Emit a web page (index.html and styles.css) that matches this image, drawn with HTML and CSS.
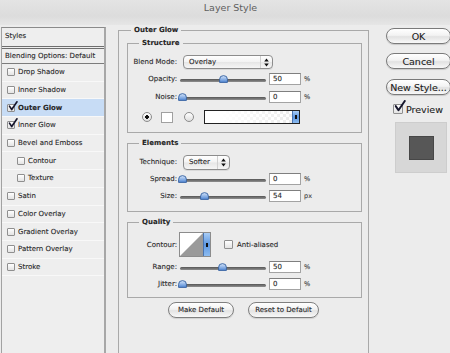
FILE: index.html
```html
<!DOCTYPE html>
<html lang="en">
<head>
<meta charset="utf-8">
<title>Layer Style</title>
<link rel="stylesheet" href="styles.css">
</head>
<body>
<svg class="defs" width="0" height="0" aria-hidden="true">
  <defs>
    <linearGradient id="thumbFill" x1="0" y1="0" x2="0" y2="1">
      <stop offset="0" stop-color="#d6e6fb"/>
      <stop offset="1" stop-color="#4f86d4"/>
    </linearGradient>
    <symbol id="thumb" viewBox="0 0 9 8">
      <path d="M0.6 7.4V4.3Q0.6 0.6 4.5 0.6Q8.4 0.6 8.4 4.3V7.4Z" fill="url(#thumbFill)" stroke="#34609f" stroke-width="0.9"/>
    </symbol>
    <symbol id="check" viewBox="0 0 11 11">
      <path d="M1.6 5.6L4.1 9.4L9.9 0.9" fill="none" stroke="#16162c" stroke-width="1.8" stroke-linecap="round" stroke-linejoin="round"/>
    </symbol>
    <symbol id="updown" viewBox="0 0 5 9">
      <path d="M2.5 0.4L4.8 3.5H0.2Z M2.5 8.6L4.8 5.5H0.2Z" fill="#111"/>
    </symbol>
  </defs>
</svg>

<div class="window">
  <header class="titlebar">Layer Style</header>
  <div class="main">
    <aside class="styles-panel">
      <div class="panel-head">Styles</div>
      <div class="panel-blend">Blending Options: Default</div>
      <ul class="effects">
        <li class="effect"><span class="cb"></span>Drop Shadow</li>
        <li class="effect"><span class="cb"></span>Inner Shadow</li>
        <li class="effect active"><span class="cb"><svg class="tick"><use href="#check"/></svg></span>Outer Glow</li>
        <li class="effect"><span class="cb"><svg class="tick"><use href="#check"/></svg></span>Inner Glow</li>
        <li class="effect"><span class="cb"></span>Bevel and Emboss</li>
        <li class="effect sub"><span class="cb"></span>Contour</li>
        <li class="effect sub"><span class="cb"></span>Texture</li>
        <li class="effect"><span class="cb"></span>Satin</li>
        <li class="effect"><span class="cb"></span>Color Overlay</li>
        <li class="effect"><span class="cb"></span>Gradient Overlay</li>
        <li class="effect"><span class="cb"></span>Pattern Overlay</li>
        <li class="effect"><span class="cb"></span>Stroke</li>
      </ul>
    </aside>

    <section class="settings">
      <fieldset class="outer">
        <legend class="outer-title">Outer Glow</legend>

        <fieldset class="group structure">
          <legend class="group-title">Structure</legend>
          <div class="row r-blend">
            <span class="lbl">Blend Mode:</span>
            <div class="select select-blend"><span class="select-val">Overlay</span><span class="select-arrows"><svg class="updown"><use href="#updown"/></svg></span></div>
          </div>
          <div class="row r-18">
            <span class="lbl">Opacity:</span>
            <div class="slider"><div class="track"></div><svg class="thumb" style="--v:0.5"><use href="#thumb"/></svg></div>
            <span class="field">50</span><span class="unit">%</span>
          </div>
          <div class="row r-17">
            <span class="lbl">Noise:</span>
            <div class="slider"><div class="track"></div><svg class="thumb" style="--v:0"><use href="#thumb"/></svg></div>
            <span class="field">0</span><span class="unit">%</span>
          </div>
          <div class="row r-color">
            <span class="radio on"></span>
            <span class="swatch"></span>
            <span class="radio"></span>
            <div class="gradbar"><span class="gradbar-fill"></span><span class="gradbar-btn"><span class="mark"></span></span></div>
          </div>
        </fieldset>

        <fieldset class="group elements">
          <legend class="group-title">Elements</legend>
          <div class="row r-tech">
            <span class="lbl">Technique:</span>
            <div class="select select-tech"><span class="select-val">Softer</span><span class="select-arrows"><svg class="updown"><use href="#updown"/></svg></span></div>
          </div>
          <div class="row r-17">
            <span class="lbl">Spread:</span>
            <div class="slider"><div class="track"></div><svg class="thumb" style="--v:0"><use href="#thumb"/></svg></div>
            <span class="field">0</span><span class="unit">%</span>
          </div>
          <div class="row r-17">
            <span class="lbl">Size:</span>
            <div class="slider"><div class="track"></div><svg class="thumb" style="--v:0.27"><use href="#thumb"/></svg></div>
            <span class="field">54</span><span class="unit">px</span>
          </div>
        </fieldset>

        <fieldset class="group quality">
          <legend class="group-title">Quality</legend>
          <div class="row r-contour">
            <span class="lbl">Contour:</span>
            <div class="contour">
              <svg class="contour-curve" viewBox="0 0 24 23" preserveAspectRatio="none"><path d="M0 23L24 0V23Z" fill="#9a9a9a"/></svg>
              <span class="contour-btn"><span class="mark"></span></span>
            </div>
            <span class="cb cb-aa"></span>
            <span class="aa-label">Anti-aliased</span>
          </div>
          <div class="row r-17 r-range">
            <span class="lbl">Range:</span>
            <div class="slider"><div class="track"></div><svg class="thumb" style="--v:0.49"><use href="#thumb"/></svg></div>
            <span class="field">50</span><span class="unit">%</span>
          </div>
          <div class="row r-17">
            <span class="lbl">Jitter:</span>
            <div class="slider"><div class="track"></div><svg class="thumb" style="--v:0"><use href="#thumb"/></svg></div>
            <span class="field">0</span><span class="unit">%</span>
          </div>
        </fieldset>

        <div class="defaults">
          <span class="pill pill-make">Make Default</span>
          <span class="pill pill-reset">Reset to Default</span>
        </div>
      </fieldset>
    </section>

    <aside class="actions">
      <span class="btn">OK</span>
      <span class="btn btn-cancel">Cancel</span>
      <span class="btn btn-new">New Style...</span>
      <div class="preview-row">
        <span class="cb cb-big"><svg class="tick"><use href="#check"/></svg></span>
        <span class="preview-label">Preview</span>
      </div>
      <div class="preview-box"><span class="preview-square"></span></div>
    </aside>
  </div>
</div>
</body>
</html>
```

FILE: styles.css
```css
* { box-sizing: border-box; }

html, body {
  margin: 0;
  padding: 0;
}

body {
  width: 450px;
  height: 353px;
  overflow: hidden;
  background: #ececec;
  font-family: "DejaVu Sans", Verdana, sans-serif;
  font-size: 7px;
  color: #262626;
  -webkit-text-stroke: 0.1px #262626;
}

.defs { position: absolute; width: 0; height: 0; }

.window {
  width: 450px;
  height: 353px;
  overflow: hidden;
}

/* ---------- title bar ---------- */
.titlebar {
  height: 25px;
  line-height: 16px;
  padding-left: 11px;
  text-align: center;
  font-size: 9.5px;
  color: #5e5e5e;
  -webkit-text-stroke: 0;
  background: linear-gradient(#e4e4e4, #dcdcdc 65%, #e6e6e6);
}

.main {
  display: flex;
  align-items: flex-start;
  height: 328px;
  overflow: hidden;
}

/* ---------- left styles panel ---------- */
.styles-panel {
  flex: none;
  width: 105px;
  height: 340px;
  margin: 2px 0 0 1px;
  background: #eeeeee;
  border: 1px solid #a2a2a2;
  border-top-color: #8a8a8a;
  border-right: 2px solid #a7a7a7;
}

.panel-head {
  height: 21px;
  padding: 0 0 0 3px;
  line-height: 17px;
  border-bottom: 3px double #6e6e6e;
}

.panel-blend {
  height: 15px;
  padding-left: 3px;
  line-height: 14px;
  border-bottom: 1px solid #7c7c7c;
}

.effects {
  list-style: none;
  margin: 0;
  padding: 0;
}

.effect {
  display: flex;
  align-items: center;
  height: 17.7px;
  padding-left: 5px;
  border-bottom: 1px solid #f8f8f8;
}

.effect.sub { padding-left: 15px; }

.effect.active {
  background: #c7dcf5;
  font-weight: bold;
}

.cb {
  position: relative;
  flex: none;
  width: 8px;
  height: 8px;
  margin-right: 3px;
  border: 1px solid #8f8f8f;
  border-radius: 1px;
  background: linear-gradient(#ffffff, #e3e3e3);
}

.tick {
  position: absolute;
  left: 0;
  top: -4px;
  width: 10px;
  height: 10px;
  overflow: visible;
}

/* ---------- center settings ---------- */
.settings {
  flex: none;
  width: 251px;
  margin-left: 12px;
}

.outer {
  margin: 0;
  min-width: 0;
  height: 345px;
  padding: 3px 6px 0 8px;
  border: 1px solid #a9a9a9;
}

.outer-title,
.group-title {
  padding: 0 3px;
  line-height: 10px;
  font-size: 7px;
  font-weight: bold;
}

.outer-title { margin-left: 4px; }
.group-title { margin-left: 11px; }

.group {
  margin: 0;
  min-width: 0;
  border: 1px solid #a9a9a9;
  padding: 6px 0 7px;
}

.elements { margin-top: 5px; }
.quality { margin-top: 5px; padding: 5px 0 5px; }

.row {
  display: flex;
  align-items: center;
}

.r-blend { height: 16px; }
.r-tech { height: 16px; }
.r-18 { height: 18px; }
.r-17 { height: 17px; }
.r-range { margin-top: 1px; }
.r-color { height: 16px; margin-top: 4px; }
.r-contour { height: 25px; }

.lbl {
  flex: none;
  width: 50px;
  padding-right: 1px;
  text-align: right;
}

/* select */
.select {
  display: flex;
  align-items: center;
  margin-left: 5px;
  padding-left: 5px;
  border: 1px solid #8d8d8d;
  border-radius: 4px;
  background: linear-gradient(#ffffff, #f3f3f3 48%, #e6e6e6 52%, #f6f6f6);
  box-shadow: 0 1px 0 rgba(0,0,0,0.08);
}

.select-blend { width: 90px; height: 14px; }
.select-tech { width: 47px; height: 15px; }

.select-val { flex: 1; }

.select-arrows {
  display: flex;
  align-items: center;
  justify-content: center;
  width: 12px;
  height: 100%;
  border-left: 1px solid #d0d0d0;
}

.updown { width: 5px; height: 9px; }

/* slider */
.slider {
  position: relative;
  flex: none;
  width: 86px;
  height: 8px;
  margin-left: 2px;
  padding-top: 4px;
}

.track {
  height: 3px;
  border-radius: 2px;
  background: linear-gradient(#555555, #8f8f8f);
}

.thumb {
  position: absolute;
  top: 0;
  left: calc(var(--v) * 82px - 2.5px);
  width: 9px;
  height: 8px;
}

.field {
  flex: none;
  width: 32px;
  height: 12px;
  margin-left: 3px;
  padding-left: 3px;
  line-height: 10px;
  background: #ffffff;
  border: 1px solid #a3a3a3;
  border-top-color: #7f7f7f;
}

.unit {
  margin-left: 3px;
  font-size: 6.5px;
  color: #4a4a4a;
}

/* color row */
.radio {
  flex: none;
  width: 10px;
  height: 10px;
  border: 1px solid #8c8c8c;
  border-radius: 50%;
  background: linear-gradient(#ffffff, #dedede);
}

.radio.on {
  margin-left: 14px;
  background: radial-gradient(circle, #111 0 1.6px, transparent 2px), linear-gradient(#ffffff, #dedede);
}

.swatch {
  flex: none;
  width: 12px;
  height: 11px;
  margin: 0 11px 0 9px;
  background: #ffffff;
  border: 1px solid #a0a0a0;
}

.gradbar {
  flex: none;
  display: flex;
  width: 96px;
  height: 14px;
  margin-left: 10px;
  border: 1px solid #222;
  background:
    linear-gradient(45deg, #e2e2e2 25%, transparent 25%, transparent 75%, #e2e2e2 75%),
    linear-gradient(45deg, #e2e2e2 25%, transparent 25%, transparent 75%, #e2e2e2 75%),
    #ffffff;
  background-size: 6px 6px;
  background-position: 0 0, 3px 3px;
}

.gradbar-fill {
  flex: 1;
  background: linear-gradient(to right, #ffffff 15%, rgba(255,255,255,0.35));
}

.gradbar-btn,
.contour-btn {
  display: flex;
  align-items: center;
  justify-content: center;
  width: 7px;
  background: linear-gradient(#a9cdf5, #5d97e2 50%, #8dbcf0);
  border-left: 1px solid #4a74b0;
}

.mark {
  width: 2px;
  height: 4px;
  background: #111;
}

/* contour */
.contour {
  display: flex;
  flex: none;
  width: 32px;
  height: 25px;
  margin-left: 1px;
  background: #ffffff;
  border: 1px solid #8c8c8c;
}

.contour-curve {
  flex: 1;
  height: 100%;
}

.cb-aa {
  width: 9px;
  height: 9px;
  margin: 0 0 0 13px;
}

.aa-label { margin-left: 4px; }

/* default buttons */
.defaults {
  display: flex;
  gap: 14px;
  margin-top: 4px;
  padding-left: 41px;
}

.pill {
  display: flex;
  align-items: center;
  justify-content: center;
  height: 16px;
  border: 1px solid #7f7f7f;
  border-radius: 8px;
  background: linear-gradient(#ffffff, #f2f2f2 45%, #e3e3e3 55%, #f8f8f8);
  box-shadow: 0 1px 1px rgba(0,0,0,0.12);
}

.pill-make { width: 66px; }
.pill-reset { width: 71px; }

/* ---------- right actions ---------- */
.actions {
  flex: none;
  display: flex;
  flex-direction: column;
  align-items: flex-start;
  width: 65px;
  margin: 3px 0 0 17px;
  font-size: 9.5px;
  color: #1a1a1a;
}

.btn {
  display: flex;
  align-items: center;
  justify-content: center;
  width: 65px;
  height: 16px;
  border: 1px solid #7a7a7a;
  border-radius: 8px;
  background: linear-gradient(#ffffff, #f3f3f3 45%, #e2e2e2 55%, #f8f8f8);
  box-shadow: 0 1px 1px rgba(0,0,0,0.15);
}

.btn-cancel { margin-top: 9px; }
.btn-new { margin-top: 10px; }

.preview-row {
  display: flex;
  align-items: center;
  height: 14px;
  margin: 7px 0 0 7px;
}

.cb-big {
  width: 10px;
  height: 10px;
  margin-right: 3px;
}

.cb-big .tick {
  width: 12px;
  height: 12px;
  top: -5px;
}

.preview-box {
  display: flex;
  align-items: center;
  justify-content: center;
  width: 52px;
  height: 51px;
  margin: 6px 0 0 9px;
  background: #d7d7d7;
  border: 1px solid #cdcdcd;
}

.preview-square {
  width: 25px;
  height: 24px;
  background: #575757;
  border: 1px solid #474747;
}
```
